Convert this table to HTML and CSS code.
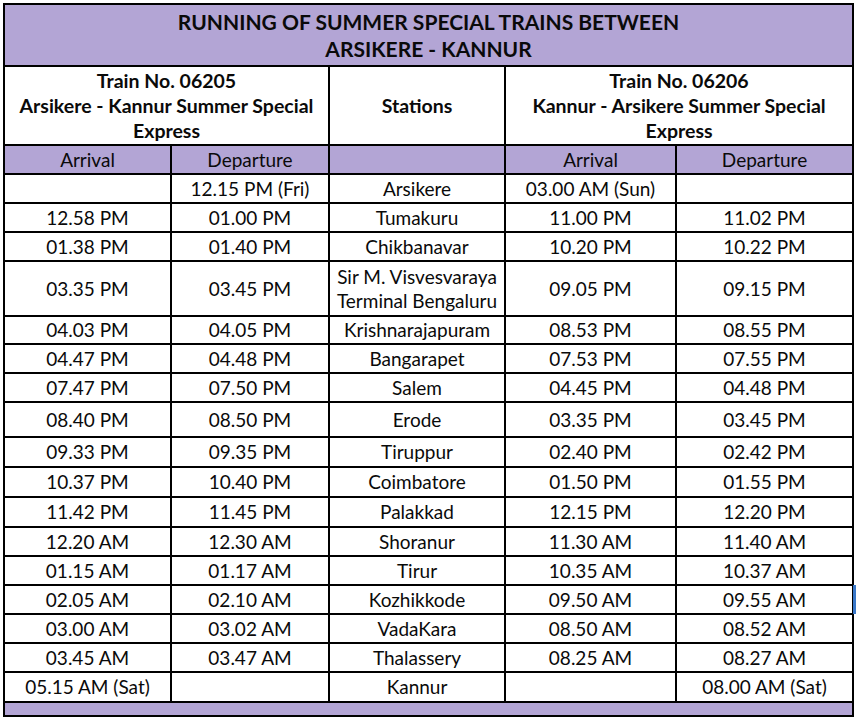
FILE: index.html
```html
<!DOCTYPE html>
<html>
<head>
<meta charset="utf-8">
<link rel="stylesheet" href="styles.css">
</head>
<body>
<div class="sheet">
<table class="timetable">
  <colgroup>
    <col class="c1"><col class="c2"><col class="c3"><col class="c4"><col class="c5">
  </colgroup>
  <tr class="title-row">
    <td colspan="5" class="title">RUNNING OF SUMMER SPECIAL TRAINS BETWEEN<br>ARSIKERE - KANNUR</td>
  </tr>
  <tr class="head-row">
    <td colspan="2" class="head">Train No. 06205<br>Arsikere - Kannur Summer Special<br>Express</td>
    <td class="head">Stations</td>
    <td colspan="2" class="head">Train No. 06206<br>Kannur - Arsikere Summer Special<br>Express</td>
  </tr>
  <tr class="sub-row">
    <td>Arrival</td><td>Departure</td><td></td><td>Arrival</td><td>Departure</td>
  </tr>
  <tr class="r29"><td></td><td>12.15 PM (Fri)</td><td>Arsikere</td><td>03.00 AM (Sun)</td><td></td></tr>
  <tr class="r29"><td>12.58 PM</td><td>01.00 PM</td><td>Tumakuru</td><td>11.00 PM</td><td>11.02 PM</td></tr>
  <tr class="r29"><td>01.38 PM</td><td>01.40 PM</td><td>Chikbanavar</td><td>10.20 PM</td><td>10.22 PM</td></tr>
  <tr class="r55"><td>03.35 PM</td><td>03.45 PM</td><td class="two">Sir M. Visvesvaraya<br>Terminal Bengaluru</td><td>09.05 PM</td><td>09.15 PM</td></tr>
  <tr class="r28"><td>04.03 PM</td><td>04.05 PM</td><td>Krishnarajapuram</td><td>08.53 PM</td><td>08.55 PM</td></tr>
  <tr class="r29"><td>04.47 PM</td><td>04.48 PM</td><td>Bangarapet</td><td>07.53 PM</td><td>07.55 PM</td></tr>
  <tr class="r29"><td>07.47 PM</td><td>07.50 PM</td><td>Salem</td><td>04.45 PM</td><td>04.48 PM</td></tr>
  <tr class="r35"><td>08.40 PM</td><td>08.50 PM</td><td>Erode</td><td>03.35 PM</td><td>03.45 PM</td></tr>
  <tr class="r30"><td>09.33 PM</td><td>09.35 PM</td><td>Tiruppur</td><td>02.40 PM</td><td>02.42 PM</td></tr>
  <tr class="r30"><td>10.37 PM</td><td>10.40 PM</td><td>Coimbatore</td><td>01.50 PM</td><td>01.55 PM</td></tr>
  <tr class="r30"><td>11.42 PM</td><td>11.45 PM</td><td>Palakkad</td><td>12.15 PM</td><td>12.20 PM</td></tr>
  <tr class="r29"><td>12.20 AM</td><td>12.30 AM</td><td>Shoranur</td><td>11.30 AM</td><td>11.40 AM</td></tr>
  <tr class="r29"><td>01.15 AM</td><td>01.17 AM</td><td>Tirur</td><td>10.35 AM</td><td>10.37 AM</td></tr>
  <tr class="r29"><td>02.05 AM</td><td>02.10 AM</td><td>Kozhikkode</td><td>09.50 AM</td><td>09.55 AM</td></tr>
  <tr class="r29"><td>03.00 AM</td><td>03.02 AM</td><td>VadaKara</td><td>08.50 AM</td><td>08.52 AM</td></tr>
  <tr class="r29"><td>03.45 AM</td><td>03.47 AM</td><td>Thalassery</td><td>08.25 AM</td><td>08.27 AM</td></tr>
  <tr class="r30"><td>05.15 AM (Sat)</td><td></td><td>Kannur</td><td></td><td>08.00 AM (Sat)</td></tr>
  <tr class="foot-row"><td colspan="5"></td></tr>
</table>
<div class="cell-cursor"></div>
</div>
</body>
</html>
```
FILE: styles.css
```css
html, body {
  margin: 0;
  padding: 0;
  background: #ffffff;
}

.sheet {
  position: relative;
  padding: 3px 0 0 3px;
  width: 856px;
  height: 719px;
  box-sizing: border-box;
  overflow: hidden;
}

.timetable {
  border-collapse: collapse;
  table-layout: fixed;
  width: 851px;
  font-family: "Lato", "Liberation Sans", sans-serif;
  font-size: 19px;
  color: #0a0a0a;
}

.c1 { width: 167px; }
.c2 { width: 158px; }
.c3 { width: 176px; }
.c4 { width: 171px; }
.c5 { width: 177px; }

.timetable td {
  border: 2px solid #000000;
  text-align: center;
  vertical-align: middle;
  padding: 0 1px;
  line-height: 22px;
  white-space: nowrap;
  overflow: hidden;
}

.title-row td {
  background: #b3a5d5;
  height: 60px;
  font-weight: 700;
  font-size: 21px;
  line-height: 27px;
  padding-top: 0;
}

.head-row td {
  height: 77px;
  font-weight: 700;
  font-size: 19.5px;
  line-height: 25px;
}

.sub-row td {
  background: #b3a5d5;
  height: 27px;
}

.r28 td { height: 26px; }
.r29 td { height: 27px; }
.r30 td { height: 28px; }
.r35 td { height: 33px; }
.r55 td { height: 53px; }

.timetable td.two {
  line-height: 24px;
}

.foot-row td {
  background: #b3a5d5;
  height: 12px;
}

.cell-cursor {
  position: absolute;
  left: 853px;
  top: 585px;
  width: 3px;
  height: 29px;
  background: #3a78c9;
}
```
